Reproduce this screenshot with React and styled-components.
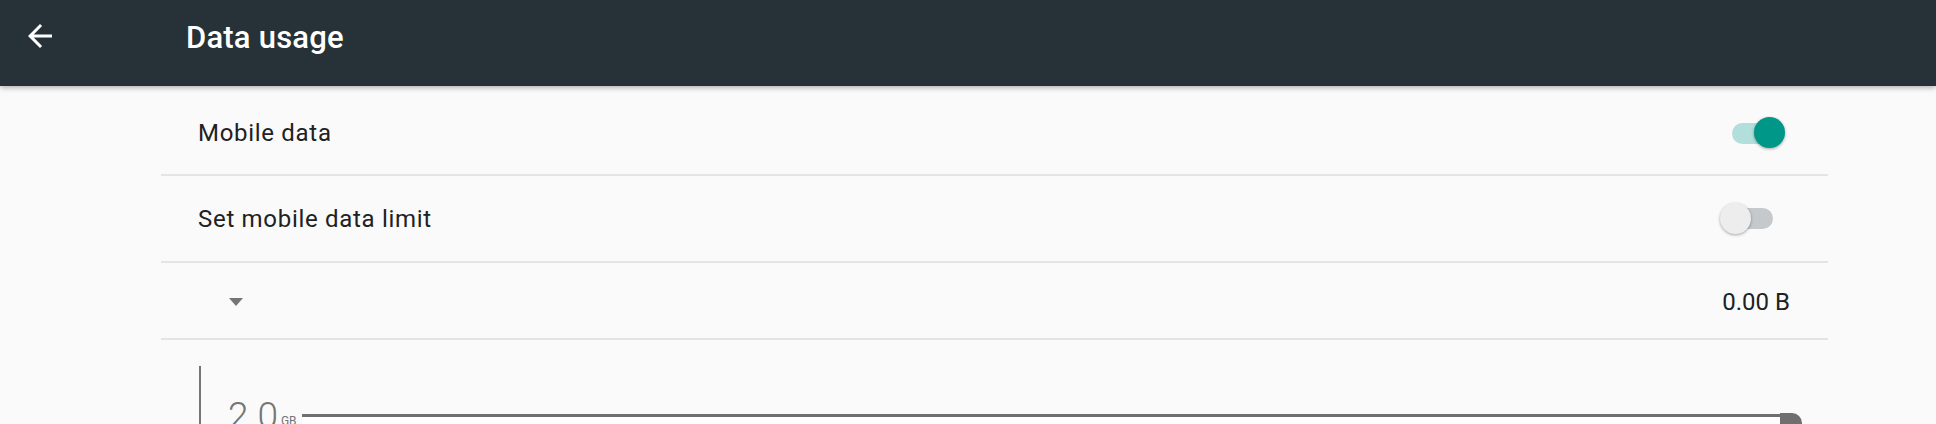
import React from 'react'
import styled, { createGlobalStyle } from 'styled-components'

const GlobalStyle = createGlobalStyle`
  html, body {
    margin: 0;
    padding: 0;
    background: #fafafa;
    overflow: hidden;
    font-family: Roboto, 'Noto Sans', sans-serif;
    -webkit-font-smoothing: antialiased;
  }
`

const Page = styled.div`
  height: 424px;
  overflow: hidden;
  background: #fafafa;
`

const Toolbar = styled.header`
  position: relative;
  z-index: 1;
  height: 86px;
  box-sizing: border-box;
  padding-bottom: 14px;
  display: flex;
  align-items: center;
  background: #263238;
  box-shadow: 0 2px 5px rgba(0, 0, 0, 0.28);
`

const BackButton = styled.div`
  width: 36px;
  height: 36px;
  margin-left: 22px;
  display: flex;
  svg {
    width: 36px;
    height: 36px;
  }
`

const Title = styled.h1`
  margin: 2px 0 0 128px;
  font-size: 31px;
  font-weight: 500;
  color: #ffffff;
  letter-spacing: 0.2px;
`

const Column = styled.main`
  margin-left: 161px;
  width: 1667px;
`

const Row = styled.div`
  height: ${(p) => p.$height}px;
  padding: ${(p) => p.$offset || 0}px 38px 0 37px;
  box-sizing: border-box;
  display: flex;
  align-items: center;
  justify-content: space-between;
  border-bottom: 2px solid #e3e5e5;
`

const Label = styled.span`
  font-size: 24px;
  color: #212121;
  letter-spacing: 0.7px;
`

const Value = styled.span`
  font-size: 24px;
  color: #212121;
`

const Dropdown = styled.span`
  margin-left: 31px;
  width: 0;
  height: 0;
  border-left: 7.5px solid transparent;
  border-right: 7.5px solid transparent;
  border-top: 8px solid #757575;
`

const SwitchBox = styled.div`
  position: relative;
  width: 70px;
  height: 34px;
  display: flex;
  align-items: center;
`

const Track = styled.div`
  width: 51px;
  height: 21px;
  border-radius: 11px;
  margin-left: ${(p) => (p.$on ? 12 : 2)}px;
  background: ${(p) => (p.$on ? '#b2dfdb' : '#c5c9cc')};
`

const Thumb = styled.div`
  position: absolute;
  top: 1px;
  left: ${(p) => (p.$on ? 34 : 0)}px;
  width: 31px;
  height: 31px;
  border-radius: 50%;
  background: ${(p) => (p.$on ? '#009688' : '#ededed')};
  box-shadow: 0 1px 3px rgba(0, 0, 0, 0.35);
`

const Switch = ({ on }) => (
  <SwitchBox>
    <Track $on={on} />
    <Thumb $on={on} />
  </SwitchBox>
)

const Chart = styled.section`
  margin: 26px 0 0 38px;
`

const Axis = styled.div`
  border-left: 2px solid #757575;
  padding: 32px 26px 0 27px;
  height: 60px;
`

const LimitRow = styled.div`
  display: flex;
  align-items: flex-start;
`

const BigValue = styled.span`
  font-size: 37px;
  line-height: 36px;
  font-weight: 300;
  color: #757575;
`

const Unit = styled.span`
  margin: 17px 0 0 3px;
  font-size: 12px;
  line-height: 12px;
  color: #757575;
`

const LimitLine = styled.div`
  flex: 1;
  margin: 16px 0 0 5px;
  height: 20px;
  border-top: 3px solid #6f6f6f;
  background: #ffffff;
`

const Handle = styled.div`
  width: 22px;
  height: 20px;
  margin-top: 15px;
  border-top-right-radius: 10px;
  background: #6f6f6f;
`

const App = () => {
  return (
    <Page>
      <GlobalStyle />
      <Toolbar>
        <BackButton>
          <svg viewBox='0 0 24 24' fill='#ffffff'>
            <path d='M20 11H7.83l5.59-5.59L12 4l-8 8 8 8 1.41-1.41L7.83 13H20v-2z' />
          </svg>
        </BackButton>
        <Title>Data usage</Title>
      </Toolbar>
      <Column>
        <Row $height={90} $offset={6}>
          <Label>Mobile data</Label>
          <Switch on />
        </Row>
        <Row $height={87}>
          <Label>Set mobile data limit</Label>
          <Switch on={false} />
        </Row>
        <Row $height={77} $offset={3}>
          <Dropdown />
          <Value>0.00 B</Value>
        </Row>
        <Chart>
          <Axis>
            <LimitRow>
              <BigValue>2.0</BigValue>
              <Unit>GB</Unit>
              <LimitLine />
              <Handle />
            </LimitRow>
          </Axis>
        </Chart>
      </Column>
    </Page>
  )
}

export default App
